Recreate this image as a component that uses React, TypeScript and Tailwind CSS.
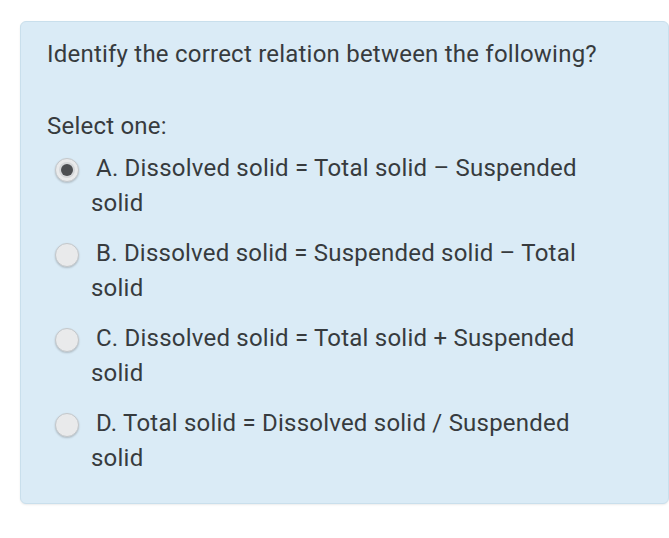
const options = [
  { key: 'a', text: 'A. Dissolved solid = Total solid – Suspended solid', checked: true },
  { key: 'b', text: 'B. Dissolved solid = Suspended solid – Total solid', checked: false },
  { key: 'c', text: 'C. Dissolved solid = Total solid + Suspended solid', checked: false },
  { key: 'd', text: 'D. Total solid = Dissolved solid / Suspended solid', checked: false },
];

function Radio({ checked }: { checked: boolean }) {
  return (
    <span className="inline-flex h-[24px] w-[24px] items-center justify-center rounded-full border border-[#c4c8cb] bg-[#e9eaeb] align-middle shadow-[0_1px_2px_rgba(0,0,0,0.2)] mr-[17px] indent-0">
      {checked && <span className="h-[12px] w-[12px] rounded-full bg-[#4d4f52] ring-2 ring-[#d5d7d9]" />}
    </span>
  );
}

export default function App() {
  return (
    <div className="min-h-[538px] bg-white pt-[21px] pl-[20px] font-['Roboto',sans-serif] text-[#373b3e] text-[24px] leading-[35px] tracking-[0.22px]">
      <div className="w-[649px] rounded-[6px] border border-[#c9dfec] bg-[#daebf6] pl-[26px] pr-4 pt-[15px] pb-[27px] shadow-[0_1px_2px_rgba(0,0,0,0.08)]">
        <div>Identify the correct relation between the following?</div>

        <div className="mt-[37px]">Select one:</div>

        <div className="mt-[7px] flex w-[565px] flex-col gap-[15px]">
          {options.map(o => (
            <div key={o.key} className="pl-[44px] indent-[-36px]">
              <Radio checked={o.checked} />
              {o.text}
            </div>
          ))}
        </div>
      </div>
    </div>
  );
}
